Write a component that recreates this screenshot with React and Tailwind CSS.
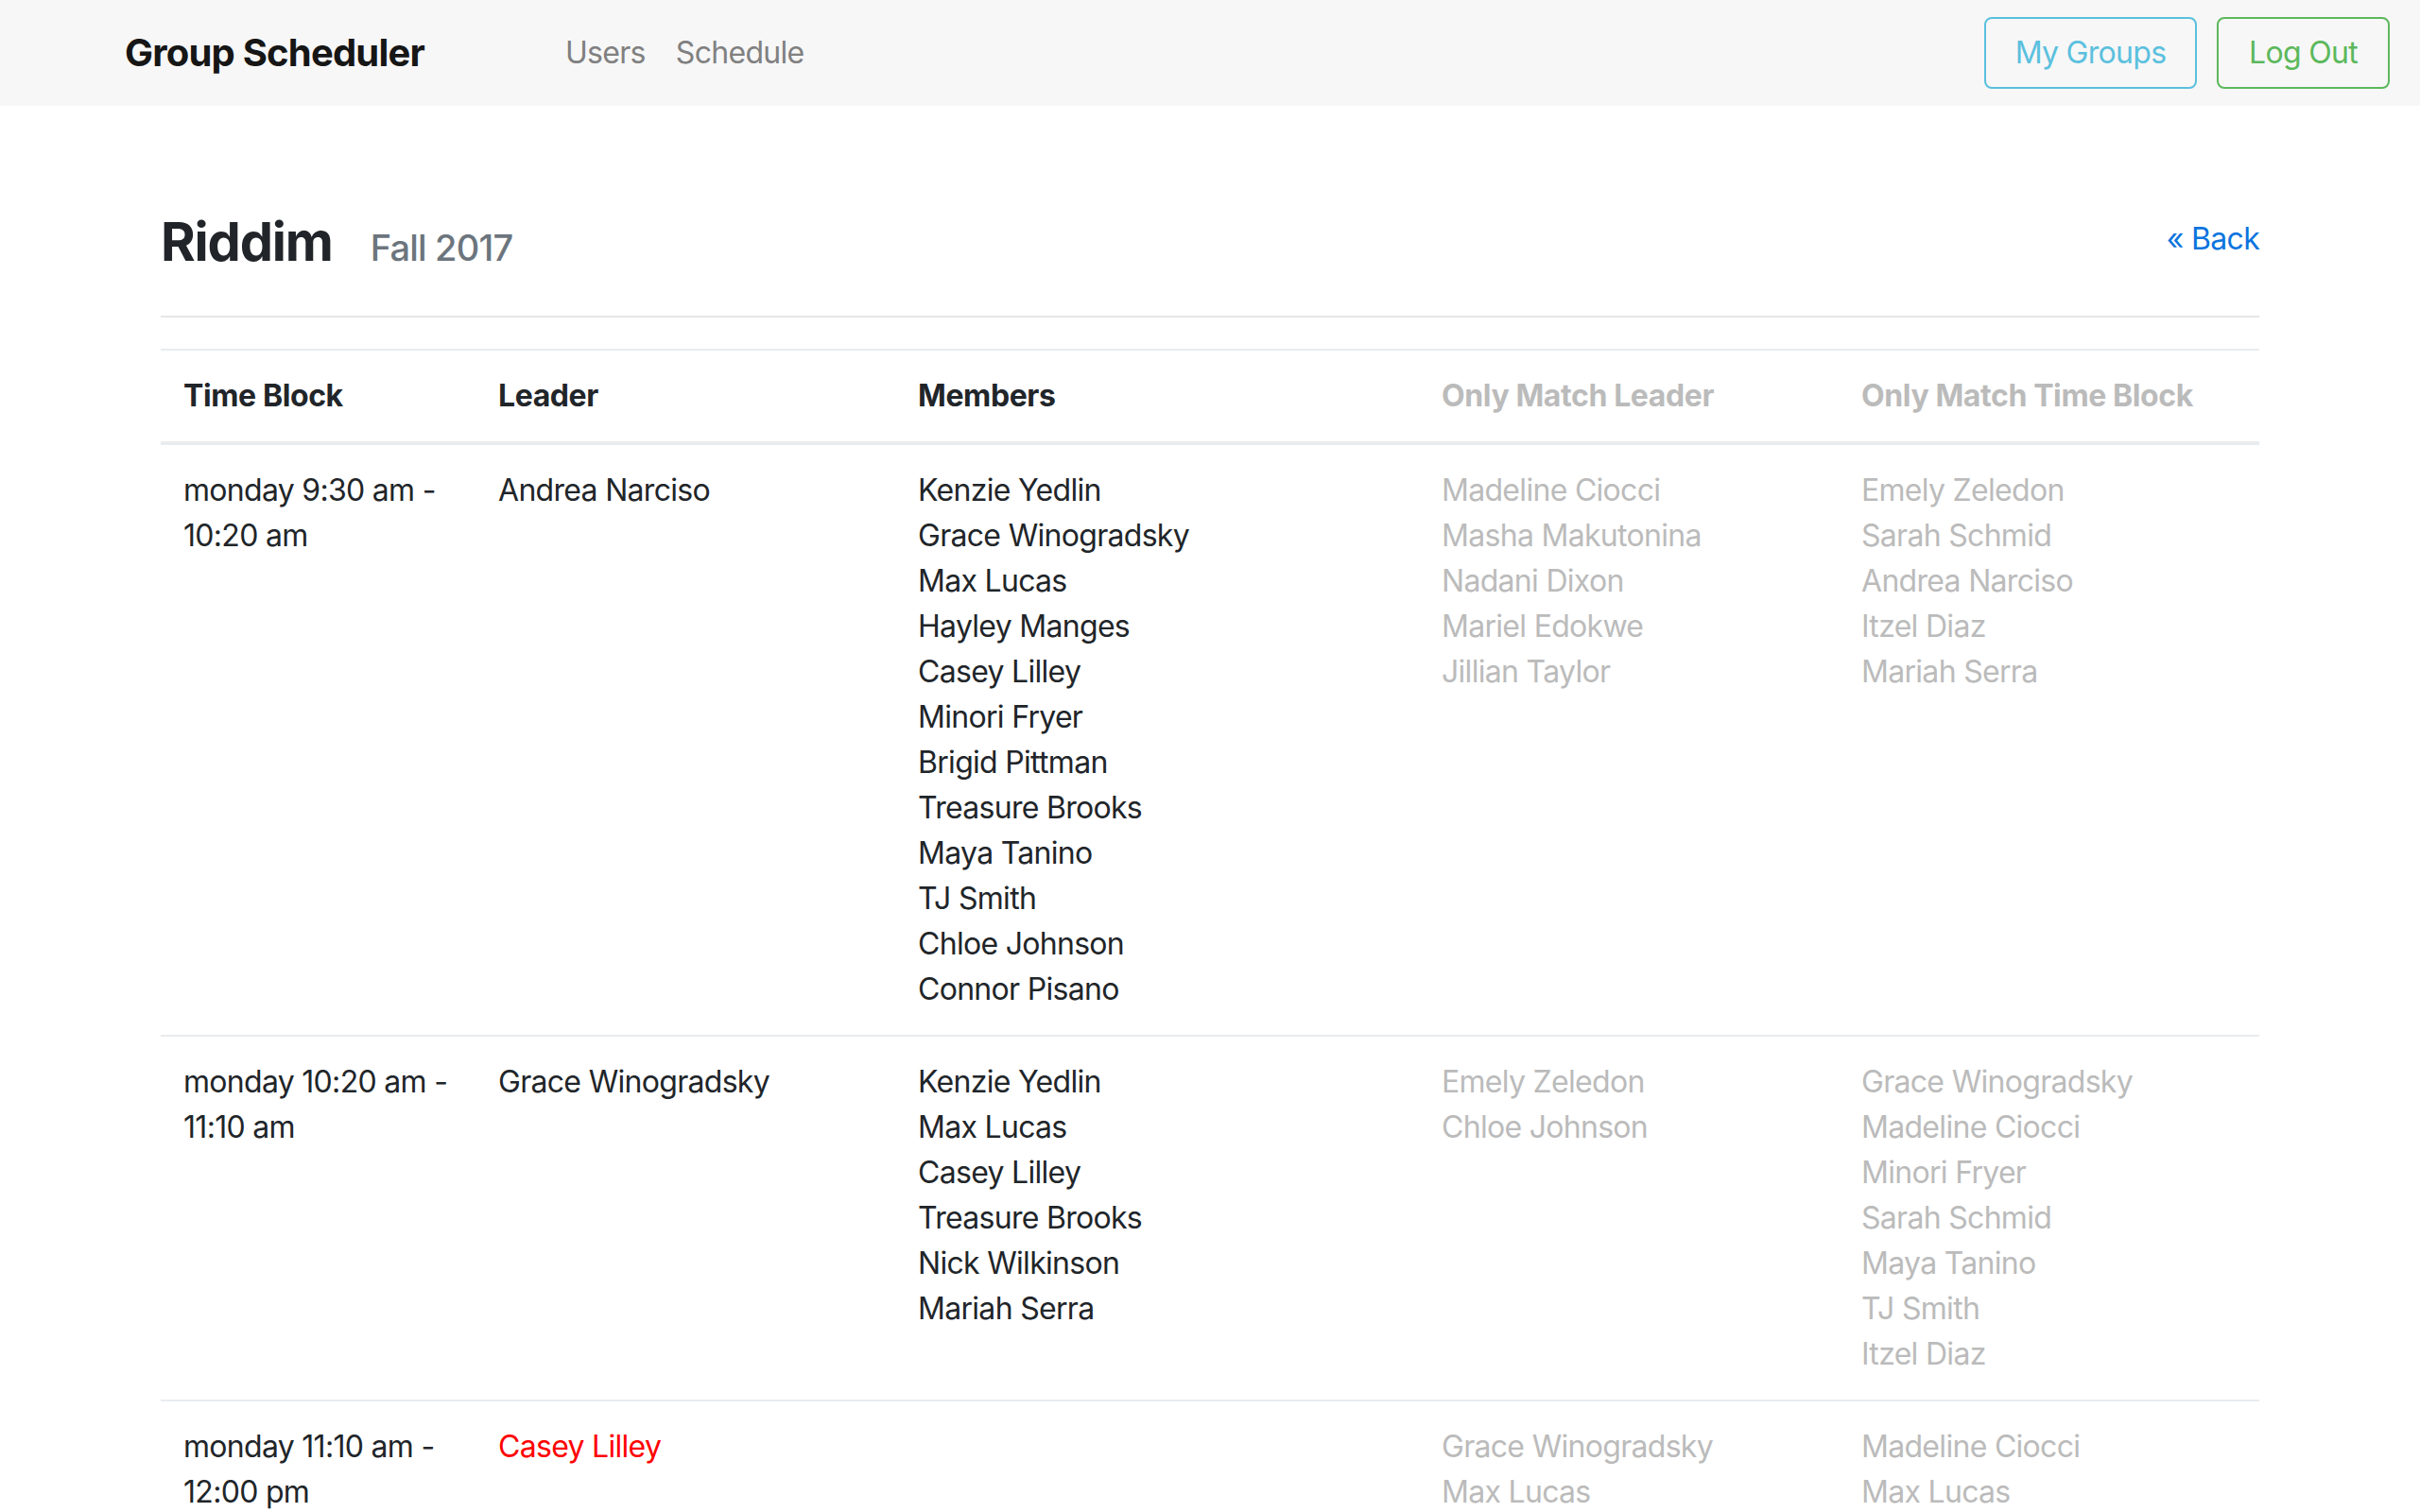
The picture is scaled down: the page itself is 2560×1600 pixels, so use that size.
import React from "react";

const FONT = { fontFamily: '"Inter", "Roboto", "Liberation Sans", sans-serif' };

const rows = [
  {
    time: ["monday 9:30 am -", "10:20 am"],
    leader: "Andrea Narciso",
    red: false,
    members: [
      "Kenzie Yedlin",
      "Grace Winogradsky",
      "Max Lucas",
      "Hayley Manges",
      "Casey Lilley",
      "Minori Fryer",
      "Brigid Pittman",
      "Treasure Brooks",
      "Maya Tanino",
      "TJ Smith",
      "Chloe Johnson",
      "Connor Pisano",
    ],
    oml: ["Madeline Ciocci", "Masha Makutonina", "Nadani Dixon", "Mariel Edokwe", "Jillian Taylor"],
    omtb: ["Emely Zeledon", "Sarah Schmid", "Andrea Narciso", "Itzel Diaz", "Mariah Serra"],
  },
  {
    time: ["monday 10:20 am -", "11:10 am"],
    leader: "Grace Winogradsky",
    red: false,
    members: ["Kenzie Yedlin", "Max Lucas", "Casey Lilley", "Treasure Brooks", "Nick Wilkinson", "Mariah Serra"],
    oml: ["Emely Zeledon", "Chloe Johnson"],
    omtb: [
      "Grace Winogradsky",
      "Madeline Ciocci",
      "Minori Fryer",
      "Sarah Schmid",
      "Maya Tanino",
      "TJ Smith",
      "Itzel Diaz",
    ],
  },
  {
    time: ["monday 11:10 am -", "12:00 pm"],
    leader: "Casey Lilley",
    red: true,
    members: [],
    oml: ["Grace Winogradsky", "Max Lucas"],
    omtb: ["Madeline Ciocci", "Max Lucas"],
  },
];

const GRID = "grid grid-cols-[333px_444px_554px_444px_445px]";

function List({ items, gray }) {
  return (
    <div className={gray ? "text-[#bbbbbb]" : "text-[#212529]"}>
      {items.map((n, i) => (
        <div key={i} className="whitespace-nowrap">
          {n}
        </div>
      ))}
    </div>
  );
}

export default function App() {
  return (
    <div
      style={FONT}
      className="min-h-[1600px] bg-white text-[32px] leading-[48px] tracking-[-0.7px] text-[#212529]"
    >
      <nav className="flex h-[112px] items-center bg-[#f7f7f7] pl-[132px] pr-[32px]">
        <div className="w-[450px] text-[40px] font-bold leading-[60px] tracking-[-0.8px] text-[#161616]">
          Group Scheduler
        </div>
        <div className="flex items-center text-[#808080]">
          <span className="px-[16px]">Users</span>
          <span className="px-[16px]">Schedule</span>
        </div>
        <div className="ml-auto flex items-center gap-[21px]">
          <button className="flex h-[76px] w-[225px] items-center justify-center rounded-[8px] border-2 border-[#5bc0de] text-[#5bc0de]">
            My Groups
          </button>
          <button className="flex h-[76px] w-[183px] items-center justify-center rounded-[8px] border-2 border-[#5cb85c] text-[#5cb85c]">
            Log Out
          </button>
        </div>
      </nav>

      <main className="mx-auto w-[2220px] pt-[106px]">
        <div className="flex items-start justify-between">
          <h2 className="flex items-baseline text-[56px] font-bold leading-[77px] tracking-[-1.2px] text-[#212529]">
            Riddim
            <span className="ml-[40px] text-[38px] font-medium tracking-[-0.8px] text-[#6c757d]">Fall 2017</span>
          </h2>
          <a className="mt-[11px] text-[#0b74de]">« Back</a>
        </div>
        <div className="mb-[33px] mt-[33px] h-[2px] bg-[#e6e6e6]" />

        <div className={`${GRID} border-b-4 border-t-2 border-[#e9ecef] font-bold tracking-[-0.4px]`}>
          <div className="whitespace-nowrap p-[24px]">Time Block</div>
          <div className="whitespace-nowrap p-[24px]">Leader</div>
          <div className="whitespace-nowrap p-[24px]">Members</div>
          <div className="whitespace-nowrap p-[24px] text-[#bbbbbb]">Only Match Leader</div>
          <div className="whitespace-nowrap p-[24px] text-[#bbbbbb]">Only Match Time Block</div>
        </div>

        {rows.map((r, i) => (
          <div key={i} className={`${GRID} ${i > 0 ? "border-t-2 border-[#e9ecef]" : ""}`}>
            <div className="p-[24px]">
              <div className="whitespace-nowrap">{r.time[0]}</div>
              <div className="whitespace-nowrap">{r.time[1]}</div>
            </div>
            <div className={`whitespace-nowrap p-[24px] ${r.red ? "text-[#ff0000]" : ""}`}>{r.leader}</div>
            <div className="p-[24px]">
              <List items={r.members} />
            </div>
            <div className="p-[24px]">
              <List items={r.oml} gray />
            </div>
            <div className="p-[24px]">
              <List items={r.omtb} gray />
            </div>
          </div>
        ))}
      </main>
    </div>
  );
}
